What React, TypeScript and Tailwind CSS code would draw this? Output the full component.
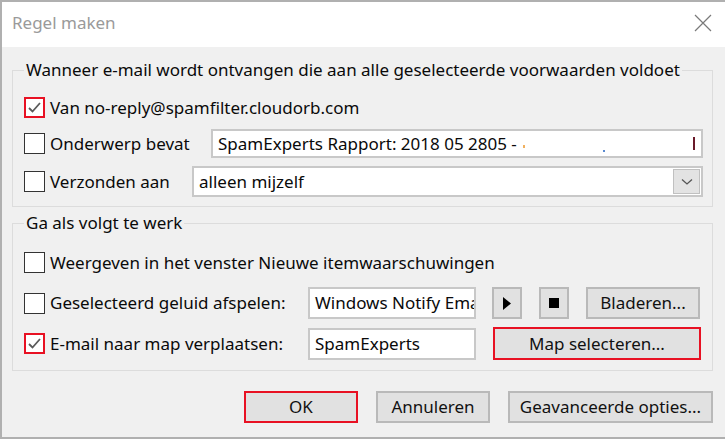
import React from "react";

const font = { fontFamily: '"Noto Sans", "Open Sans", sans-serif' };

function Check({ checked }: { checked?: boolean }) {
  return (
    <div
      className={
        "w-[21px] h-[21px] shrink-0 bg-white flex items-center justify-center " +
        (checked ? "border-2 border-[#e81123]" : "border border-[#333333]")
      }
    >
      {checked && (
        <svg width="15" height="13" viewBox="0 0 15 13">
          <polyline points="2,7 5.5,10.5 13,2" fill="none" stroke="#5a5a5a" strokeWidth="1.8" />
        </svg>
      )}
    </div>
  );
}

function Btn({ children, red, className }: { children?: React.ReactNode; red?: boolean; className?: string }) {
  return (
    <div
      className={
        "h-[32px] bg-[#e1e1e1] flex items-center justify-center text-[17px] text-[#111] " +
        (red ? "border-2 border-[#e81123] " : "border-2 border-[#b9b9b9] ") +
        (className || "")
      }
    >
      {children}
    </div>
  );
}

export default function App() {
  return (
    <div
      className="w-[725px] h-[439px] flex flex-col bg-[#f0f0f0] border-t-2 border-l-2 border-b-2 border-[#b0b0b0] overflow-hidden text-[#0a0a0a]"
      style={font}
    >
      {/* title bar */}
      <div className="h-[45px] shrink-0 bg-white flex items-center justify-between pl-[10px] pr-[10px]">
        <span className="text-[17px] text-[#9a9a9a] -mt-[3px]">Regel maken</span>
        <svg width="20" height="20" viewBox="0 0 20 20" className="mr-[2px] -mt-[4px]">
          <path d="M2 2 L18 18 M18 2 L2 18" stroke="#7a7a7a" strokeWidth="1.2" />
        </svg>
      </div>

      <div className="flex-1 flex flex-col pl-[10px] pr-[12px] pt-[14px]">
        {/* group 1 */}
        <fieldset className="border border-[#dcdcdc] pl-[11px] pr-[9px] pb-[9px]">
          <legend className="px-[2px] text-[17px] leading-[18px]">
            Wanneer e-mail wordt ontvangen die aan alle geselecteerde voorwaarden voldoet
          </legend>
          <div className="flex flex-col pt-[18px]">
            <div className="flex items-center h-[21px] gap-[5px]">
              <Check checked />
              <span className="text-[17px]">Van no-reply@spamfilter.cloudorb.com</span>
            </div>
            <div className="flex items-center mt-[11px] h-[29px]">
              <Check />
              <span className="text-[17px] ml-[5px] w-[161px]">Onderwerp bevat</span>
              <div className="flex-1 h-[29px] bg-white border-2 border-[#c8c8c8] flex items-center pl-[5px] pr-[4px] text-[17px]">
                <span>SpamExperts Rapport: 2018 05 2805 - </span>
                <span className="w-[2px] h-[3px] bg-[#f0b060] ml-[6px] mt-[6px]"></span>
                <span className="flex-1" />
                <span className="w-[2px] h-[2px] bg-[#5a8ad0] mr-[88px] mt-[14px]"></span>
                <span className="w-[2px] h-[13px] bg-[#6a1a2a] mr-[2px]"></span>
              </div>
            </div>
            <div className="flex items-center mt-[8px] h-[31px]">
              <Check />
              <span className="text-[17px] ml-[5px] w-[142px]">Verzonden aan</span>
              <div className="flex-1 h-[31px] bg-white border-2 border-[#c8c8c8] flex items-center pl-[5px] pr-[1px] text-[17px]">
                <span className="flex-1">alleen mijzelf</span>
                <div className="w-[27px] h-[25px] bg-[#e3e3e3] border border-[#c0c0c0] flex items-center justify-center">
                  <svg width="12" height="8" viewBox="0 0 12 8">
                    <polyline points="1,1.5 6,6 11,1.5" fill="none" stroke="#555" strokeWidth="1.3" />
                  </svg>
                </div>
              </div>
            </div>
          </div>
        </fieldset>

        {/* group 2 */}
        <fieldset className="border border-[#dcdcdc] mt-[7px] pl-[11px] pr-[10px] pb-[10px]">
          <legend className="px-[2px] text-[17px] leading-[18px]">Ga als volgt te werk</legend>
          <div className="flex flex-col pt-[20px]">
            <div className="flex items-center h-[21px] gap-[5px]">
              <Check />
              <span className="text-[17px]">Weergeven in het venster Nieuwe itemwaarschuwingen</span>
            </div>
            <div className="flex items-center mt-[14px] h-[32px]">
              <Check />
              <span className="text-[17px] ml-[5px] w-[258px]">Geselecteerd geluid afspelen:</span>
              <div className="w-[168px] h-[32px] bg-white border-2 border-[#c8c8c8] flex items-center pl-[5px] text-[17px] overflow-hidden whitespace-nowrap">
                Windows Notify Email
              </div>
              <Btn className="w-[30px] ml-[16px]">
                <svg width="8" height="13" viewBox="0 0 8 13">
                  <polygon points="0,0 8,6.5 0,13" fill="#000" />
                </svg>
              </Btn>
              <Btn className="w-[30px] ml-[17px]">
                <div className="w-[10px] h-[10px] bg-black" />
              </Btn>
              <Btn className="w-[114px] ml-[17px]">Bladeren...</Btn>
            </div>
            <div className="flex items-center mt-[8px] h-[33px]">
              <Check checked />
              <span className="text-[17px] ml-[5px] w-[258px]">E-mail naar map verplaatsen:</span>
              <div className="w-[168px] h-[32px] bg-white border-2 border-[#c8c8c8] flex items-center pl-[5px] text-[17px]">
                SpamExperts
              </div>
              <Btn red className="w-[208px] ml-[17px] h-[33px]">Map selecteren...</Btn>
            </div>
          </div>
        </fieldset>

        {/* footer */}
        <div className="flex justify-end mt-[20px] gap-[18px]">
          <Btn red className="w-[114px]">OK</Btn>
          <Btn className="w-[114px]">Annuleren</Btn>
          <Btn className="w-[205px]">Geavanceerde opties...</Btn>
        </div>
      </div>
    </div>
  );
}
